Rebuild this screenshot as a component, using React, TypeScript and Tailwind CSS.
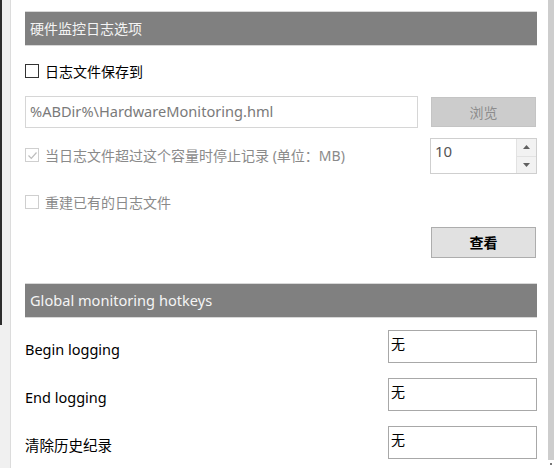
const font = { fontFamily: '"Noto Sans", "Noto Sans CJK SC", sans-serif' };

function Header({ title, latin }: { title: string; latin?: boolean }) {
  return (
    <div
      className={`h-[35px] bg-[#808080] border-y border-[#d8d8d8] flex items-center px-[5px] text-[#f4f4f4] ${
        latin ? "text-[14.6px]" : "text-[14px]"
      }`}
    >
      {title}
    </div>
  );
}

function Check({ checked, disabled, label }: { checked?: boolean; disabled?: boolean; label: string }) {
  return (
    <div className="flex items-center gap-[6px] h-[16px]">
      <span
        className={`w-[14px] h-[14px] border flex items-center justify-center bg-white ${
          disabled ? "border-[#cfcfcf]" : "border-[#333]"
        }`}
      >
        {checked && (
          <svg width="11" height="11" viewBox="0 0 11 11">
            <path d="M1.5 5.5 L4.3 8.3 L9.5 2.5" fill="none" stroke="#bdbdbd" strokeWidth="1.2" />
          </svg>
        )}
      </span>
      <span className={`text-[14px] ${disabled ? "text-[#8a8a8a]" : "text-black"}`}>{label}</span>
    </div>
  );
}

function HotkeyRow({ label }: { label: string }) {
  return (
    <div className="flex items-center justify-between h-[33px]">
      <span className="text-[14.5px] text-black pt-[6px]">{label}</span>
      <div className="w-[149px] h-[33px] border border-[#a8a8a8] bg-white px-[2px] pt-[3px] text-[14px] leading-[20px] text-black">
        无
      </div>
    </div>
  );
}

export default function App() {
  return (
    <div className="w-[554px] h-[468px] flex bg-white overflow-hidden" style={font}>
      <div className="w-[11px] flex flex-col border-r border-[#dcdcdc] bg-[#f0f0f0]">
        <div className="flex flex-1">
          <div className="w-[2px] h-[325px] bg-[#2e2e2e]" />
        </div>
      </div>

      <div className="flex-1 pl-[14px] pr-[11px] pt-[11px]">
        <Header title="硬件监控日志选项" />

        <div className="mt-[17px]">
          <Check label="日志文件保存到" />
        </div>

        <div className="mt-[17px] flex items-center gap-[13px]">
          <div className="w-[393px] h-[32px] border border-[#d6d6d6] flex items-center px-[4px] text-[14.6px] text-[#7a7a7a]">
            %ABDir%\HardwareMonitoring.hml
          </div>
          <div className="w-[105px] h-[30px] bg-[#cccccc] border border-[#c4c4c4] flex items-center justify-center text-[14px] text-[#8c8c8c]">
            浏览
          </div>
        </div>

        <div className="mt-[10px] flex items-start justify-between">
          <div className="mt-[9px]">
            <Check checked disabled label="当日志文件超过这个容量时停止记录 (单位：MB)" />
          </div>
          <div className="w-[107px] h-[36px] border border-[#cfcfcf] flex">
            <div className="flex-1 px-[4px] pt-[2px] text-[15px] leading-[20px] text-[#555]">10</div>
            <div className="w-[20px] flex flex-col border-l border-[#e2e2e2] bg-[#f2f2f2]">
              <div className="flex-1 flex items-center justify-center border-b border-[#e2e2e2]">
                <svg width="7" height="4" viewBox="0 0 7 4"><path d="M0 4 L3.5 0 L7 4 Z" fill="#606060" /></svg>
              </div>
              <div className="flex-1 flex items-center justify-center">
                <svg width="7" height="4" viewBox="0 0 7 4"><path d="M0 0 L3.5 4 L7 0 Z" fill="#606060" /></svg>
              </div>
            </div>
          </div>
        </div>

        <div className="mt-[20px]">
          <Check disabled label="重建已有的日志文件" />
        </div>

        <div className="mt-[17px] flex justify-end pr-[1px]">
          <div className="w-[105px] h-[31px] bg-[#e1e1e1] border border-[#adadad] flex items-center justify-center text-[14px] font-semibold text-black">
            查看
          </div>
        </div>

        <div className="mt-[25px]">
          <Header title="Global monitoring hotkeys" latin />
        </div>

        <div className="mt-[12px] flex flex-col gap-[15px]">
          <HotkeyRow label="Begin logging" />
          <HotkeyRow label="End logging" />
          <HotkeyRow label="清除历史纪录" />
        </div>
      </div>

      <div className="w-[6px] flex flex-col">
        <div className="h-[460px] bg-[#cdcdcd]" />
        <div className="flex-1 flex items-center justify-center">
          <span className="w-[2px] h-[2px] bg-[#777]" />
        </div>
      </div>
    </div>
  );
}
